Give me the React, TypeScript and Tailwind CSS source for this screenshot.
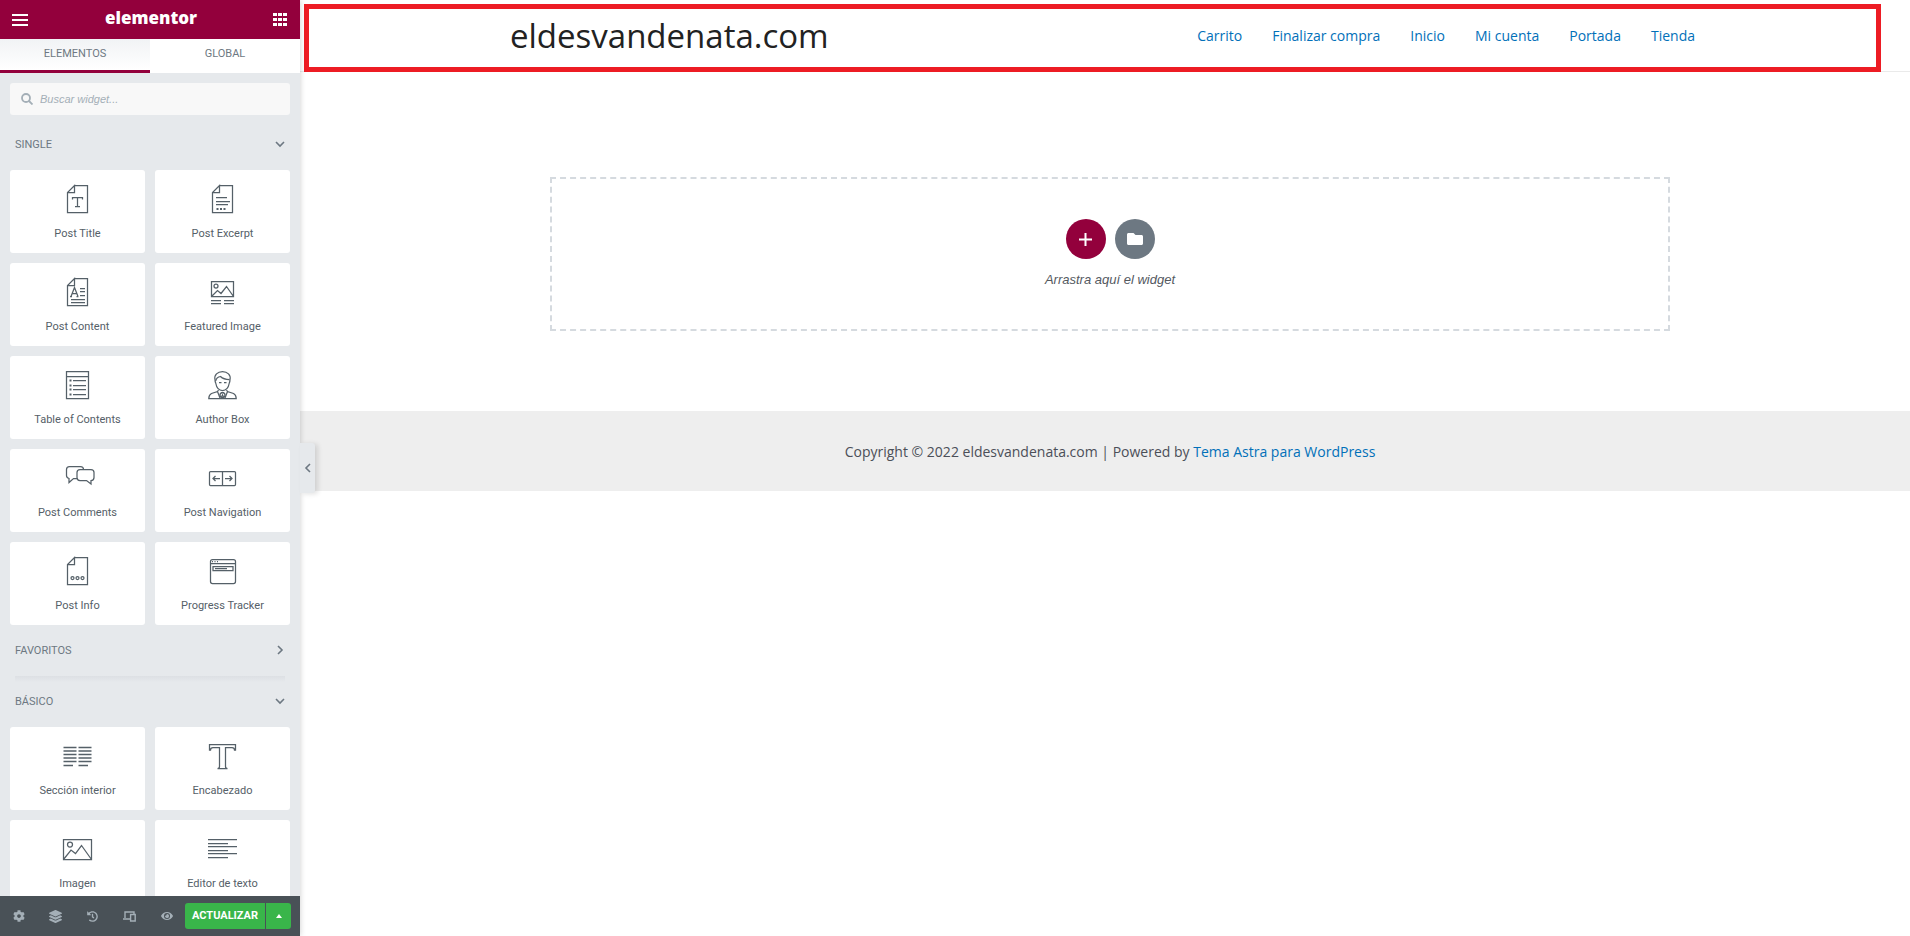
import type { ReactNode } from 'react';
import { FaCog, FaEye, FaFolder, FaHistory, FaLayerGroup } from 'react-icons/fa';

type Widget = { title: string; icon: ReactNode };

const sheet = <path d="M11.5 .5H24.5V27.5H4.5V7.5L11.5 .5V7.5H4.5" />;

const singleWidgets: Widget[] = [
  {
    title: 'Post Title',
    icon: (
      <>
        {sheet}
        <path d="M9.5 14.5V12.5H19.5V14.5M14.5 12.5V21.5M12 21.5H17" />
      </>
    ),
  },
  {
    title: 'Post Excerpt',
    icon: (
      <>
        {sheet}
        <path d="M8 12.5H19M8 16.5H22M8 19.5H20" />
        <path d="M8.5 24H10.5M12 24H14M15.5 24H17.5" strokeWidth="2" />
      </>
    ),
  },
  {
    title: 'Post Content',
    icon: (
      <>
        {sheet}
        <path d="M8 18.5L11.5 9.5L15 18.5M9 15.5H14M7 18.5H9M13.5 18.5H15.5M17 10.5H22M17 13.5H22M17 17.5H22M8 21.5H22M8 24.5H22" />
      </>
    ),
  },
  {
    title: 'Featured Image',
    icon: (
      <>
        <path d="M3.5 3.5H25.5V18.5H3.5ZM3.5 18.5L9.5 12.5L13 15.5L18.5 8.5L25.5 18.5M3 22.5H13M16 22.5H26M3 25.5H13M16 25.5H26" />
        <circle cx="8" cy="8" r="2" />
      </>
    ),
  },
  {
    title: 'Table of Contents',
    icon: (
      <>
        <path d="M3.5 .5H25.5V27.5H3.5ZM3.5 5.5H25.5M10 9.5H23M10 14.5H23M10 18.5H23M10 23.5H23" />
        <path d="M6.5 9.5H8.5M6.5 14.5H8.5M6.5 18.5H8.5M6.5 23.5H8.5" strokeWidth="2" />
      </>
    ),
  },
  {
    title: 'Author Box',
    icon: (
      <>
        <path d="M7 8.5C6 4 9.5 .5 14.5 .5C19.5 .5 23 4 22 8.5C22 10 21.8 11 21.3 12C20.5 16.5 18 19.5 14.5 19.5C11 19.5 8.5 16.5 7.7 12C7.2 11 7 10 7 8.5Z" />
        <path d="M7.7 10C8.2 7.5 9.5 6 12.5 5.5C14.5 7.5 18 8.5 21.5 8.5M11 11.5H13.5M16 11.5H18.5" />
        <path d="M10.5 19L9.5 20.5L3.5 22.5C1.5 23.5 .8 25.5 .8 27.5H28.2C28.2 25.5 27.5 23.5 25.5 22.5L19.5 20.5L18.5 19M9.5 20.5L12 27M19.5 20.5L17 27" />
        <circle cx="14.5" cy="24" r="2.5" />
        <path d="M13 21.5H16M13 27L14.5 24L16 27" />
      </>
    ),
  },
  {
    title: 'Post Comments',
    icon: (
      <>
        <path d="M14 14.5H10.5L6 18.5V14.5C4.5 14 3.5 13 3.5 11.5V5.5C3.5 3.5 4.5 2.5 6.5 2.5H17.5C19.5 2.5 20.5 3.5 20.5 5.5" />
        <path d="M17 5.5H28C30 5.5 31 6.5 31 8.5V13.5C31 15.5 30 16.5 28 16.5V20L23.5 16.5H17C15 16.5 14 15.5 14 13.5V8.5C14 6.5 15 5.5 17 5.5Z" />
      </>
    ),
  },
  {
    title: 'Post Navigation',
    icon: (
      <path d="M2.5 7.5H26.5Q27.5 7.5 27.5 8.5V20.5Q27.5 21.5 26.5 21.5H2.5Q1.5 21.5 1.5 20.5V8.5Q1.5 7.5 2.5 7.5ZM14.5 7.5V21.5M12 14.5H5M7.5 12L5 14.5L7.5 17M17 14.5H24M21.5 12L24 14.5L21.5 17" />
    ),
  },
  {
    title: 'Post Info',
    icon: (
      <>
        {sheet}
        <circle cx="9.5" cy="21" r="1.5" />
        <circle cx="14.5" cy="21" r="1.5" />
        <circle cx="19.5" cy="21" r="1.5" />
      </>
    ),
  },
  {
    title: 'Progress Tracker',
    icon: (
      <>
        <rect x="2.5" y="2.5" width="25" height="24" rx="2" />
        <path d="M2.5 6.5H27.5M5 9.5H25V13.5H5ZM7 11.5H19M4 4.5H5M6.5 4.5H7.5M9 4.5H10" />
      </>
    ),
  },
];

const basicWidgets: Widget[] = [
  {
    title: 'Sección interior',
    icon: (
      <path d="M.5 5.5H13.5M15.5 5.5H28.5M.5 9H13.5M15.5 9H28.5M.5 12.5H13.5M15.5 12.5H28.5M.5 16H13.5M15.5 16H28.5M.5 19.5H13.5M15.5 19.5H28.5M.5 23.5H10M15.5 23.5H25" strokeWidth="1.5" />
    ),
  },
  {
    title: 'Encabezado',
    icon: <path d="M1.5 2.5H27.5V8H26.5C26.5 6 25.5 5.5 24 5.5H17.5V24.5C17.5 26 18 26.5 19.5 26.5H9.5C11 26.5 11.5 26 11.5 24.5V5.5H5C3.5 5.5 2.5 6 2.5 8H1.5Z" />,
  },
  {
    title: 'Imagen',
    icon: (
      <>
        <path d="M.5 4.5H28.5V24.5H.5ZM.5 24.5L8 15L12.5 18.5L18.5 10.5L28.5 24.5" />
        <circle cx="7" cy="9.5" r="2.5" />
      </>
    ),
  },
  {
    title: 'Editor de texto',
    icon: <path d="M0 4.5H29M0 8.5H20M0 11.5H29M0 15.5H20M0 18.5H29M0 22.5H20" />,
  },
];

const navLinks = ['Carrito', 'Finalizar compra', 'Inicio', 'Mi cuenta', 'Portada', 'Tienda'];

function Chevron({ className }: { className: string }) {
  return (
    <svg viewBox="0 0 10 10" className={`size-[10px] fill-none stroke-[#6d7882] ${className}`} strokeWidth="1.6">
      <path d="M1 3L5 7L9 3" />
    </svg>
  );
}

function Category({ title, open }: { title: string; open?: boolean }) {
  return (
    <button type="button" className="flex h-[51px] w-full items-center justify-between px-[15px] text-[11px] text-[#6d7882]" aria-expanded={!!open}>
      <span className="pt-[2px] uppercase">{title}</span>
      <Chevron className={open ? 'mb-px' : 'mb-px -rotate-90'} />
    </button>
  );
}

function WidgetGrid({ widgets }: { widgets: Widget[] }) {
  return (
    <div className="grid grid-cols-2 gap-[10px] px-[10px]">
      {widgets.map((widget) => (
        <button key={widget.title} type="button" className="flex h-[83px] flex-col items-center rounded-[3px] bg-white pt-[15px] text-[#556068]">
          <svg viewBox="0 0 29 28" className="h-7 w-[29px] overflow-visible fill-none stroke-current" strokeWidth="1.25">
            {widget.icon}
          </svg>
          <span className="mt-[13px] text-[11px] leading-4">{widget.title}</span>
        </button>
      ))}
    </div>
  );
}

function Panel() {
  return (
    <aside className="relative z-10 flex w-[300px] shrink-0 flex-col bg-[#e6e9ec] font-[Roboto,sans-serif] shadow-[0_0_6px_rgba(0,0,0,0.2)]">
      <header className="flex h-[39px] shrink-0 items-center justify-between bg-[#93003c] pr-[13px] pl-[11px] text-white">
        <button type="button" aria-label="Menú">
          <svg viewBox="0 0 18 12" className="h-3 w-[18px] fill-current">
            <path d="M1 0H17V2H1ZM1 5H17V7H1ZM1 10H17V12H1Z" />
          </svg>
        </button>
        <span className="pb-[3px] font-['Open_Sans',sans-serif] text-[17px] leading-5 font-extrabold">elementor</span>
        <button type="button" aria-label="Widgets">
          <svg viewBox="0 0 14 14" className="size-[14px] fill-current">
            <path d="M0 0H4V3H0ZM5 0H9V3H5ZM10 0H14V3H10ZM0 5H4V8H0ZM5 5H9V8H5ZM10 5H14V8H10ZM0 10H4V13H0ZM5 10H9V13H5ZM10 10H14V13H10Z" />
          </svg>
        </button>
      </header>
      <div className="grid h-[34px] shrink-0 grid-cols-2 bg-white text-[11px] text-[#6d7882]">
        <button type="button" className="border-b-3 border-[#93003c] bg-linear-to-b from-[#f1f3f5] to-white uppercase">
          Elementos
        </button>
        <button type="button" className="border-b-3 border-white uppercase">
          Global
        </button>
      </div>
      <div className="min-h-0 flex-1 overflow-hidden">
        <label className="mx-[10px] mt-[10px] mb-1 flex h-8 items-center gap-[7px] rounded-[3px] bg-[#f8f8f8] px-[11px]">
          <svg viewBox="0 0 12 12" className="size-3 shrink-0 fill-none stroke-[#a4afb7]" strokeWidth="1.8">
            <circle cx="5" cy="5" r="4" />
            <path d="M8 8L11.5 11.5" />
          </svg>
          <input
            type="search"
            aria-label="Buscar widget"
            placeholder="Buscar widget..."
            className="w-full bg-transparent font-['Liberation_Sans',sans-serif] text-[11px] italic outline-none placeholder:text-[#a4afb7]"
          />
        </label>
        <Category title="Single" open />
        <WidgetGrid widgets={singleWidgets} />
        <Category title="Favoritos" />
        <div className="mx-[15px] -mb-[6px] h-[6px] bg-linear-to-b from-[#dde0e4] to-[#e6e9ec]" />
        <Category title="Básico" open />
        <WidgetGrid widgets={basicWidgets} />
      </div>
      <footer className="flex h-10 shrink-0 items-center justify-between bg-[#495157] pr-[9px] pl-3 text-[#a4afb7]">
        <div className="flex items-center gap-6">
          <button type="button" aria-label="Ajustes" className="flex w-[13px] justify-center">
            <FaCog size={12} />
          </button>
          <button type="button" aria-label="Navegador" className="flex w-[13px] justify-center">
            <FaLayerGroup size={13} className="shrink-0" />
          </button>
          <button type="button" aria-label="Historial" className="flex w-[13px] justify-center">
            <FaHistory size={11} />
          </button>
          <button type="button" aria-label="Modo responsive" className="flex w-[13px] justify-center">
            <svg viewBox="0 0 13 11" className="h-[11px] w-[13px] fill-none stroke-current" strokeWidth="1.4">
              <path d="M2 7V1H11V3M0 8H7M7.6 3.5H12.2V10H7.6Z" />
            </svg>
          </button>
          <button type="button" aria-label="Vista previa" className="flex w-[13px] justify-center">
            <FaEye size={12} />
          </button>
        </div>
        <div className="flex h-[26px] gap-px text-[11px] font-bold text-white">
          <button type="button" className="w-20 rounded-l-[3px] bg-[#39b54a] pt-px">
            ACTUALIZAR
          </button>
          <button type="button" aria-label="Opciones" className="flex w-[25px] items-center justify-center rounded-r-[3px] bg-[#39b54a]">
            <svg viewBox="0 0 6 4" className="h-1 w-[6px] fill-current">
              <path d="M3 0L6 4H0Z" />
            </svg>
          </button>
        </div>
      </footer>
      <button type="button" aria-label="Ocultar panel" className="absolute top-[443px] left-full flex h-[50px] w-[15px] items-center justify-center rounded-r-[3px] bg-[#e6e9ec] shadow-[3px_1px_5px_rgba(0,0,0,0.12)]">
        <Chevron className="rotate-90" />
      </button>
    </aside>
  );
}

export default function App() {
  return (
    <div className="flex h-screen overflow-hidden bg-white">
      <Panel />
      <div className="min-w-0 flex-1 font-['Open_Sans','Segoe_UI',sans-serif] text-[14px] text-[#4b4f58]">
        <header className="relative border-b border-[#eaeaea] pl-[10px]">
          <div className="mx-auto flex h-[71px] max-w-[1200px] items-center justify-between">
            <a href="#inicio" className="text-[33px] leading-10 text-[#222]">
              eldesvandenata.com
            </a>
            <nav className="flex gap-[30px] pr-[15px] text-[#0170b9]">
              {navLinks.map((link) => (
                <a key={link} href="#menu">
                  {link}
                </a>
              ))}
            </nav>
          </div>
          <div className="pointer-events-none absolute top-1 right-[29px] -bottom-px left-1 border-5 border-[#ed1c24]" />
        </header>
        <main className="pt-[105px] pr-[10px] pb-20 pl-5">
          <section className="mx-auto flex h-[154px] max-w-[1120px] flex-col items-center border-2 border-dashed border-[#d5dadf] pt-10">
            <div className="flex gap-[9px] text-white">
              <button type="button" aria-label="Añadir sección" className="flex size-10 items-center justify-center rounded-full bg-[#93003c]">
                <svg viewBox="0 0 13 13" className="size-[13px] fill-none stroke-current" strokeWidth="2">
                  <path d="M6.5 0V13M0 6.5H13" />
                </svg>
              </button>
              <button type="button" aria-label="Añadir plantilla" className="flex size-10 items-center justify-center rounded-full bg-[#6d7882]">
                <FaFolder size={16} />
              </button>
            </div>
            <p className="mt-[11px] font-['Liberation_Sans',sans-serif] text-[13px] leading-5 text-[#54595f] italic">Arrastra aquí el widget</p>
          </section>
        </main>
        <footer className="flex h-20 items-center justify-center bg-[#eee] pl-[10px]">
          <p>
            Copyright © 2022 eldesvandenata.com | Powered by{' '}
            <a href="#astra" className="text-[#0170b9]">
              Tema Astra para WordPress
            </a>
          </p>
        </footer>
      </div>
    </div>
  );
}
